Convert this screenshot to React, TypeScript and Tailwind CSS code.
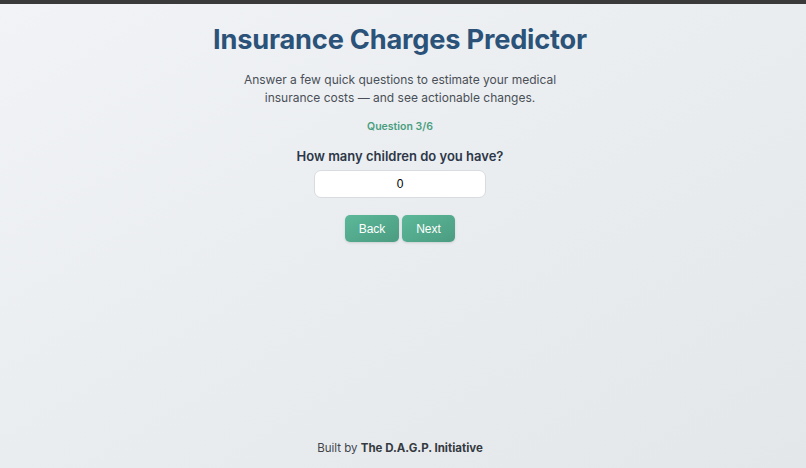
import React, { useState } from 'react';

const App: React.FC = () => {
  const [children, setChildren] = useState('0');

  return (
    <div className="min-h-screen flex flex-col pr-[6px] bg-gradient-to-br from-[#f1f3f6] to-[#e3e7ea] font-['Inter',sans-serif]">
      {/* Top strip */}
      <div className="h-[4px] -mr-[6px] bg-[#3a3a3a]" />

      <main className="flex-1 flex flex-col items-center">
        <h1 className="mt-[18px] text-[27.2px] leading-[36px] font-bold text-[#2b5278] tracking-[-0.2px]">
          Insurance Charges Predictor
        </h1>

        <p className="mt-[13px] text-center text-[12px] leading-[18px] text-[#4a4f57]">
          Answer a few quick questions to estimate your medical
          <br />
          insurance costs — and see actionable changes.
        </p>

        <div className="mt-[13px] text-[10.5px] leading-[14px] font-semibold text-[#4a9e80]">Question 3/6</div>

        <h2 className="mt-[13px] text-[13px] leading-[18px] font-semibold text-[#2d3748]">
          How many children do you have?
        </h2>

        <input
          type="number"
          value={children}
          onChange={(e) => setChildren(e.target.value)}
          className="mt-[5px] w-[172px] h-[28px] rounded-[7px] border border-[#d8dce0] bg-white text-center text-[12px] text-black font-['Liberation_Sans',sans-serif] outline-none [appearance:textfield] [&::-webkit-inner-spin-button]:appearance-none"
        />

        <div className="mt-[17px] flex gap-[3px]">
          <button className="w-[54px] h-[27px] rounded-[5px] bg-gradient-to-br from-[#5cb899] to-[#4b9c81] text-white text-[12px] font-['Liberation_Sans',sans-serif] shadow-sm">
            Back
          </button>
          <button className="w-[53px] h-[27px] rounded-[5px] bg-gradient-to-br from-[#5cb899] to-[#4b9c81] text-white text-[12px] font-['Liberation_Sans',sans-serif] shadow-sm">
            Next
          </button>
        </div>
      </main>

      <footer className="pb-[12px] text-center text-[11.5px] leading-[16px] text-[#3f444b]">
        Built by <span className="font-bold text-[#353a40]">The D.A.G.P. Initiative</span>
      </footer>
    </div>
  );
};

export default App;
